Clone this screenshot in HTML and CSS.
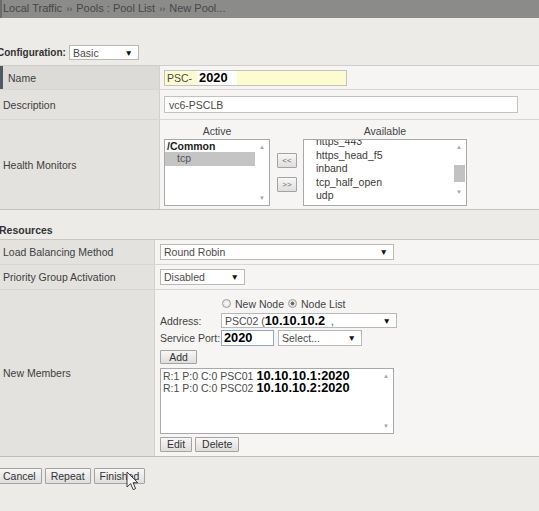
FILE: index.html
```html
<!DOCTYPE html>
<html>
<head>
<meta charset="utf-8">
<link rel="stylesheet" href="styles.css">
</head>
<body>
<div class="crumb">Local Traffic <span class="sep">››</span> Pools : Pool List <span class="sep">››</span> New Pool...</div>

<div class="config">
  <span class="cfg-label">Configuration:</span>
  <div class="sel sel-basic"><span>Basic</span><i class="arr">▼</i></div>
</div>

<div class="tbl t1">
  <div class="row row-name">
    <div class="lbl req">Name</div>
    <div class="val"><div class="inp inp-name">PSC-<b class="paste">2020</b></div></div>
  </div>
  <div class="row row-desc">
    <div class="lbl">Description</div>
    <div class="val"><div class="inp inp-desc">vc6-PSCLB</div></div>
  </div>
  <div class="row row-hm">
    <div class="lbl">Health Monitors</div>
    <div class="val val-hm">
      <div class="mcol mcol-active">
        <div class="mhead">Active</div>
        <div class="lst lst-active">
          <div class="items">
            <div class="grp">/Common</div>
            <div class="it it-sel">tcp</div>
          </div>
          <div class="sb"><i class="up">▲</i><i class="dn">▼</i></div>
        </div>
      </div>
      <div class="mv">
        <button class="btn btn-mv">&lt;&lt;</button>
        <button class="btn btn-mv">&gt;&gt;</button>
      </div>
      <div class="mcol mcol-avail">
        <div class="mhead">Available</div>
        <div class="lst lst-avail">
          <div class="items">
            <div class="scroll-inner">
              <div class="it">https_443</div>
              <div class="it">https_head_f5</div>
              <div class="it">inband</div>
              <div class="it">tcp_half_open</div>
              <div class="it">udp</div>
              <div class="it">/Common/vc6_PSC_LB_monitor</div>
            </div>
          </div>
          <div class="sb"><i class="up">▲</i><span class="thumb"></span><i class="dn">▼</i></div>
        </div>
      </div>
    </div>
  </div>
</div>

<div class="sect">Resources</div>

<div class="tbl t2">
  <div class="row row-lb">
    <div class="lbl">Load Balancing Method</div>
    <div class="val"><div class="sel sel-lb"><span>Round Robin</span><i class="arr">▼</i></div></div>
  </div>
  <div class="row row-pg">
    <div class="lbl">Priority Group Activation</div>
    <div class="val"><div class="sel sel-pg"><span>Disabled</span><i class="arr">▼</i></div></div>
  </div>
  <div class="row row-nm">
    <div class="lbl">New Members</div>
    <div class="val val-nm">
      <div class="nm-line nm-radio">
        <span class="nm-key"></span>
        <span class="radio"></span><span class="rtxt">New Node</span>
        <span class="radio on"></span><span class="rtxt">Node List</span>
      </div>
      <div class="nm-line nm-addr">
        <span class="nm-key">Address:</span>
        <div class="sel sel-addr"><span>PSC02 (<b class="paste-b">10.10.10.2</b> &nbsp;,</span><i class="arr">▼</i></div>
      </div>
      <div class="nm-line nm-port">
        <span class="nm-key">Service Port:</span>
        <div class="inp inp-port"><b class="paste-b">2020</b></div>
        <div class="sel sel-port"><span>Select...</span><i class="arr">▼</i></div>
      </div>
      <div class="nm-line nm-add">
        <button class="btn btn-add">Add</button>
      </div>
      <div class="lst lst-mem">
        <div class="items">
          <div class="mem">R:1 P:0 C:0 PSC01 <b class="paste-b">10.10.10.1:2020</b></div>
          <div class="mem">R:1 P:0 C:0 PSC02 <b class="paste-b">10.10.10.2:2020</b></div>
        </div>
        <div class="sb"><i class="up">▲</i><i class="dn">▼</i></div>
      </div>
      <div class="nm-line nm-edit">
        <button class="btn btn-sm">Edit</button>
        <button class="btn btn-sm">Delete</button>
      </div>
    </div>
  </div>
</div>

<div class="footer">
  <button class="btn btn-foot btn-cancel">Cancel</button>
  <button class="btn btn-foot">Repeat</button>
  <button class="btn btn-foot">Finished</button>
</div>

<svg class="cursor" width="14" height="21" viewBox="0 0 14 21">
  <path d="M1 1 L1 16 L4.6 12.6 L7.2 18.6 L9.6 17.6 L7.1 11.7 L11.8 11.7 Z" fill="#ffffff" fill-opacity="0.85" stroke="#3a3a3a" stroke-width="1" stroke-linejoin="round"/>
</svg>
</body>
</html>
```

FILE: styles.css
```css
html, body {
  margin: 0;
  padding: 0;
}
body {
  width: 539px;
  height: 511px;
  overflow: hidden;
  position: relative;
  background: #ecebe8;
  font-family: "Liberation Sans", Arial, sans-serif;
  font-size: 10.5px;
  color: #3e3e3e;
}

/* breadcrumb bar */
.crumb {
  height: 18px;
  box-sizing: border-box;
  background: #8b8b8a;
  border-left: 2px solid #6c6c6c;
  padding-left: 1px;
  color: #474747;
  font-size: 11px;
  line-height: 17px;
  white-space: nowrap;
}
.crumb .sep {
  font-size: 9px;
  vertical-align: 0;
  padding: 0 1px;
}

/* configuration line */
.config {
  display: flex;
  align-items: center;
  height: 15px;
  margin-top: 27px;
}
.cfg-label {
  font-weight: bold;
  font-size: 10px;
  color: #333;
  margin-left: -3px;
  width: 72px;
  flex: none;
  white-space: nowrap;
}

/* generic select / input */
.sel {
  display: flex;
  align-items: center;
  justify-content: space-between;
  box-sizing: border-box;
  background: #fff;
  border: 1px solid #b9b9b9;
  padding: 0 5px 0 3px;
  color: #4a4a4a;
  white-space: nowrap;
  overflow: hidden;
}
.sel .arr {
  font-style: normal;
  font-size: 8.5px;
  color: #111;
}
.sel-basic { width: 70px; height: 15px; }
.sel-lb { width: 234px; height: 16px; }
.sel-pg { width: 85px; height: 16px; }
.sel-addr { width: 176px; height: 15px; }
.sel-port { width: 84px; height: 16px; margin-left: 4px; }

.inp {
  box-sizing: border-box;
  border: 1px solid #c2c2c2;
  background: #fff;
  display: flex;
  align-items: center;
  padding-left: 2px;
  color: #4a4a4a;
  white-space: nowrap;
}
.inp-name {
  width: 183px;
  height: 16px;
  background: #fdfcd0;
}
.inp-desc {
  width: 354px;
  height: 17px;
  padding-left: 4px;
}
.inp-port {
  width: 53px;
  height: 16px;
  border-color: #8fa6c4;
}

.paste {
  background: #fff;
  color: #000;
  font-size: 12.8px;
  margin-left: 5px;
  padding: 0 9px 0 2px;
  line-height: 14px;
}
.paste-b {
  color: #000;
  font-size: 12.8px;
  line-height: 12px;
  background: #fff;
}

/* tables */
.tbl {
  border-top: 1px solid #cfcecb;
}
.t1 { margin-top: 5px; }
.row {
  display: flex;
  box-sizing: border-box;
  border-bottom: 1px solid #d7d6d3;
}
.lbl {
  flex: none;
  box-sizing: border-box;
  background: #e3e2df;
  border-right: 1px solid #d2d1ce;
  padding-left: 3px;
  display: flex;
  align-items: center;
  color: #3e3e3e;
  white-space: nowrap;
}
.t1 .lbl { width: 160px; }
.t2 .lbl { width: 155px; }
.lbl.req {
  border-left: 3px solid #4f5a64;
  padding-left: 5px;
  background: #dcdbd8;
}
.val {
  flex: 1;
  background: #f6f5f3;
  display: flex;
  align-items: center;
}
.t1 .val { padding-left: 4px; }
.t2 .val { padding-left: 5px; }

.row-name { height: 24px; }
.row-desc { height: 30px; }
.row-hm { height: 90px; border-bottom-color: #c3c2bf; }
.row-lb { height: 25px; }
.row-pg { height: 25px; }
.row-nm { height: 167px; border-bottom-color: #bdbcb9; }

/* health monitors */
.val-hm {
  align-items: flex-start;
  padding-top: 5px;
}
.mcol {
  display: flex;
  flex-direction: column;
}
.mcol-active { width: 106px; }
.mcol-avail { width: 164px; }
.mhead {
  height: 13px;
  line-height: 13px;
  text-align: center;
  color: #444;
  margin-bottom: 1px;
}
.lst {
  box-sizing: border-box;
  border: 1px solid #a9a9a9;
  background: #fff;
  display: flex;
  overflow: hidden;
}
.lst .items {
  flex: 1;
  overflow: hidden;
  min-width: 0;
}
.lst-active { height: 67px; }
.lst-avail { height: 67px; }
.grp {
  font-weight: bold;
  color: #222;
  line-height: 12px;
  padding-left: 2px;
}
.it {
  line-height: 13.5px;
  padding-left: 12px;
  color: #3a3a3a;
  white-space: nowrap;
}
.it-sel {
  background: #c4c4c4;
  color: #555;
}
.lst-avail .scroll-inner {
  margin-top: -5px;
}
.sb {
  flex: none;
  width: 14px;
  display: flex;
  flex-direction: column;
  align-items: center;
  justify-content: space-between;
  padding: 3px 0 3px;
  box-sizing: border-box;
}
.sb i {
  font-style: normal;
  font-size: 6px;
  color: #a5a5a5;
  line-height: 8px;
}
.lst-avail .sb {
  justify-content: flex-start;
}
.lst-avail .sb .thumb {
  display: block;
  width: 11px;
  height: 17px;
  background: #c2c2c2;
  margin-top: 14px;
  margin-bottom: 6px;
}

.mv {
  display: flex;
  flex-direction: column;
  gap: 9px;
  margin: 28px 6px 0 7px;
}

/* buttons */
.btn {
  font-family: "Liberation Sans", Arial, sans-serif;
  font-size: 10.5px;
  color: #333;
  background: linear-gradient(#f7f7f7, #dedede);
  border: 1px solid #a3a3a3;
  border-radius: 1px;
  padding: 0 5px;
  margin: 0;
  height: 15px;
  line-height: 13px;
  box-sizing: border-box;
}
.btn-mv {
  width: 20px;
  height: 15px;
  padding: 0;
  font-size: 8px;
  color: #666;
}
.btn-add {
  width: 37px;
  height: 14px;
}
.btn-sm {
  height: 15px;
  padding: 0 6px;
}

/* resources */
.sect {
  height: 29px;
  box-sizing: border-box;
  padding-top: 14px;
  line-height: 13px;
  font-weight: bold;
  color: #333;
  margin-left: -1px;
}
.t2 { border-top-color: #c8c7c4; }

/* new members */
.row-nm .lbl { align-items: center; }
.val-nm {
  flex-direction: column;
  align-items: flex-start;
  padding-top: 7px;
}
.nm-line {
  display: flex;
  align-items: center;
}
.nm-key {
  width: 61px;
  flex: none;
  white-space: nowrap;
  color: #444;
}
.nm-radio { height: 13px; }
.radio {
  width: 9px;
  height: 9px;
  box-sizing: border-box;
  border: 1px solid #9c9c9c;
  border-radius: 50%;
  background: radial-gradient(#fafafa, #dcdcdc);
  margin-left: 1px;
  margin-right: 4px;
}
.radio.on {
  background: radial-gradient(#666 0, #777 35%, #e8e8e8 45%, #e0e0e0 100%);
  margin-left: 4px;
}
.rtxt { color: #444; }
.nm-addr { margin-top: 3px; height: 15px; }
.nm-port { margin-top: 2px; height: 16px; }
.nm-add { margin-top: 4px; height: 14px; }
.lst-mem {
  margin-top: 4px;
  width: 234px;
  height: 66px;
}
.lst-mem .items { padding-top: 1px; }
.mem {
  line-height: 12px;
  height: 12px;
  padding-left: 2px;
  color: #4a4a4a;
  white-space: nowrap;
}
.nm-edit {
  margin-top: 3px;
  gap: 3px;
}

/* footer */
.footer {
  display: flex;
  gap: 3px;
  margin-top: 11px;
}
.btn-foot { height: 16px; }
.btn-cancel { margin-left: -3px; }

/* mouse pointer overlay */
.cursor {
  position: absolute;
  left: 126px;
  top: 471px;
}
```
